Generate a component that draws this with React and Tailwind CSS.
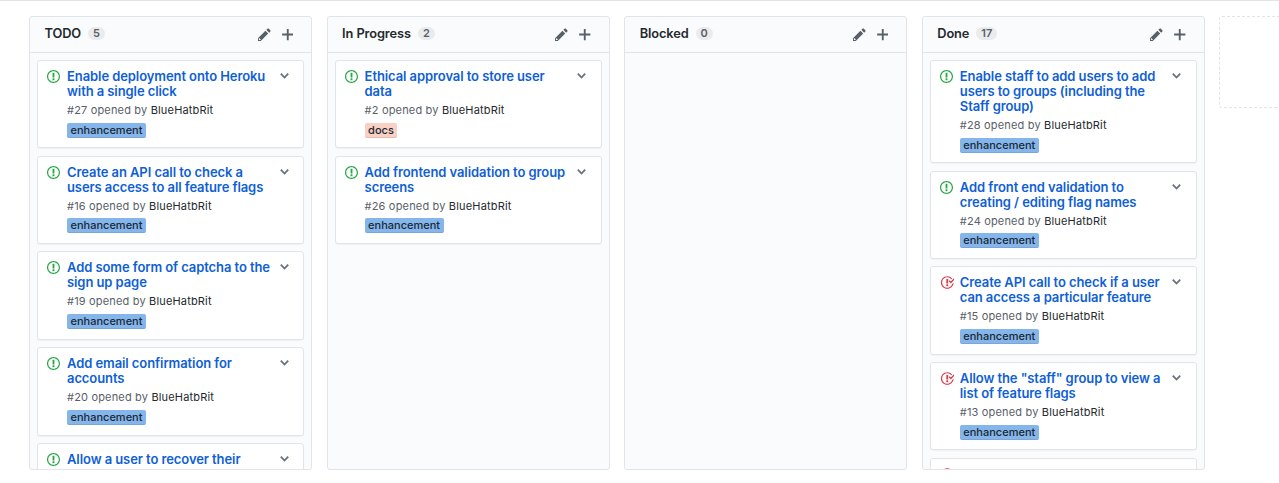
const PATHS = {
  open: "M7 2.3c3.14 0 5.7 2.56 5.7 5.7s-2.56 5.7-5.7 5.7A5.71 5.71 0 0 1 1.3 8c0-3.14 2.56-5.7 5.7-5.7zM7 1C3.14 1 0 4.14 0 8s3.14 7 7 7 7-3.14 7-7-3.14-7-7-7zm1 3H6v5h2V4zm0 6H6v2h2v-2z",
  closed: "M7 10h2v2H7v-2zm2-6H7v5h2V4zm1.5 1.5l-1 1L12 9l4-4.5-1-1L12 7l-1.5-1.5zM8 13.7A5.71 5.71 0 0 1 2.3 8c0-3.14 2.56-5.7 5.7-5.7 1.83 0 3.45.88 4.5 2.2l.92-.92A6.947 6.947 0 0 0 8 1C4.14 1 1 4.14 1 8s3.14 7 7 7 7-3.14 7-7l-1.52 1.52c-.66 2.41-2.86 4.19-5.48 4.19v-.01z",
  pencil: "M0 12v3h3l8-8-3-3-8 8zm3 2H1v-2h1v1h1v1zm10.3-9.3L12 6 9 3l1.3-1.3a.996.996 0 0 1 1.41 0l1.59 1.59c.39.39.39 1.02 0 1.41z",
  plus: "M12 9H7v5H5V9H0V7h5V2h2v5h5v2z",
  chevron: "M5 11L0 6l1.5-1.5L5 8.25 8.5 4.5 10 6l-5 5z",
};

const COLUMNS = [
  {
    name: "TODO",
    count: 5,
    cards: [
      { lines: ["Enable deployment onto Heroku", "with a single click"], id: 27 },
      { lines: ["Create an API call to check a", "users access to all feature flags"], id: 16 },
      { lines: ["Add some form of captcha to the", "sign up page"], id: 19 },
      { lines: ["Add email confirmation for", "accounts"], id: 20 },
      { lines: ["Allow a user to recover their"] },
    ],
  },
  {
    name: "In Progress",
    count: 2,
    cards: [
      { lines: ["Ethical approval to store user", "data"], id: 2, label: "docs" },
      { lines: ["Add frontend validation to group", "screens"], id: 26 },
    ],
  },
  { name: "Blocked", count: 0, cards: [] },
  {
    name: "Done",
    count: 17,
    cards: [
      { lines: ["Enable staff to add users to add", "users to groups (including the", "Staff group)"], id: 28 },
      { lines: ["Add front end validation to", "creating / editing flag names"], id: 24 },
      { lines: ["Create API call to check if a user", "can access a particular feature"], id: 15, closed: true },
      { lines: ['Allow the "staff" group to view a', "list of feature flags"], id: 13, closed: true },
      { lines: [], closed: true },
    ],
  },
];

function Icon({ name, box, className }) {
  return (
    <svg viewBox={box} className={`shrink-0 fill-current ${className}`} aria-hidden="true">
      <path fillRule="evenodd" d={PATHS[name]} />
    </svg>
  );
}

function Card({ lines, id, label = "enhancement", closed }) {
  return (
    <article className="flex min-h-[88.3px] shrink-0 items-start rounded-[3px] border border-[#e1e4e8] bg-white pb-[9.3px] pl-[9px] pr-[14.5px] pt-[8px] shadow-[0_1px_1px_rgba(27,31,35,0.04)]">
      <div className="flex w-[20px] shrink-0">
        {closed ? (
          <Icon name="closed" box="0 0 16 16" className="h-[15px] w-[14.5px] text-[#d73a49]" />
        ) : (
          <Icon name="open" box="0 0 14 16" className="h-[15px] w-[13px] text-[#28a745]" />
        )}
      </div>
      <div className="min-w-0 flex-1">
        <h3 className="text-[13px] font-semibold leading-[15px] tracking-[-0.085px] text-[#0f5fd6]">
          {lines.map((line) => (
            <span key={line} className="block whitespace-nowrap">
              {line}
            </span>
          ))}
        </h3>
        {id && (
          <>
            <p className="mt-[4px] whitespace-nowrap text-[11px] leading-[15px] tracking-[0.17px] text-[#586069]">
              #{id} opened by <span className="text-[#24292e]">BlueHatbRit</span>
            </p>
            <div className="mt-[4.6px] mb-[0.4px] flex">
              <span
                className={`rounded-[2px] px-[3.5px] text-[11px] font-medium leading-[15px] text-[#1c2733] shadow-[inset_0_-1px_0_rgba(27,31,35,0.1)] ${
                  label === "docs" ? "bg-[#f9d0c4]" : "bg-[#84b6eb]"
                }`}
              >
                {label}
              </span>
            </div>
          </>
        )}
      </div>
      <Icon name="chevron" box="0 0 10 16" className="h-[14px] w-[9px] text-[#6a737d]" />
    </article>
  );
}

function Column({ name, count, cards }) {
  return (
    <section className="flex h-[453.5px] w-[283px] shrink-0 flex-col overflow-hidden rounded-[3px] border border-[#e1e4e8] bg-[#fafbfc]">
      <header className="flex h-[36px] shrink-0 items-center border-b border-[#e1e4e8] pl-[14.5px] pr-[18px]">
        <div className="flex items-center pb-[2px]">
          <h2 className="text-[12.8px] font-semibold leading-[18px] tracking-[-0.1px] text-[#24292e]">{name}</h2>
          <span className="ml-[7px] rounded-full bg-[#e9ebed] px-[5px] text-[11px] font-semibold leading-[13px] text-[#586069]">
            {count}
          </span>
        </div>
        <div className="ml-auto flex items-center gap-[11px] text-[#586069]">
          <Icon name="pencil" box="0 0 14 16" className="h-[15px] w-[13px]" />
          <Icon name="plus" box="0 0 12 16" className="h-[15px] w-[11.5px]" />
        </div>
      </header>
      <div className="flex min-h-0 flex-1 flex-col gap-[7.45px] overflow-hidden px-[7px] pt-[7px]">
        {cards.map((card, i) => (
          <Card key={i} {...card} />
        ))}
      </div>
    </section>
  );
}

export default function App() {
  return (
    <main className="h-[483px] w-[1279px] overflow-hidden border-t border-[#e1e4e8] bg-white font-['Inter',sans-serif]">
      <div className="flex items-start gap-[14.6px] pl-[29px] pt-[15px]">
        {COLUMNS.map((column) => (
          <Column key={column.name} {...column} />
        ))}
        <div className="h-[92px] w-[283px] shrink-0 rounded-[3px] border border-dashed border-[#e1e4e8]" />
      </div>
    </main>
  );
}
